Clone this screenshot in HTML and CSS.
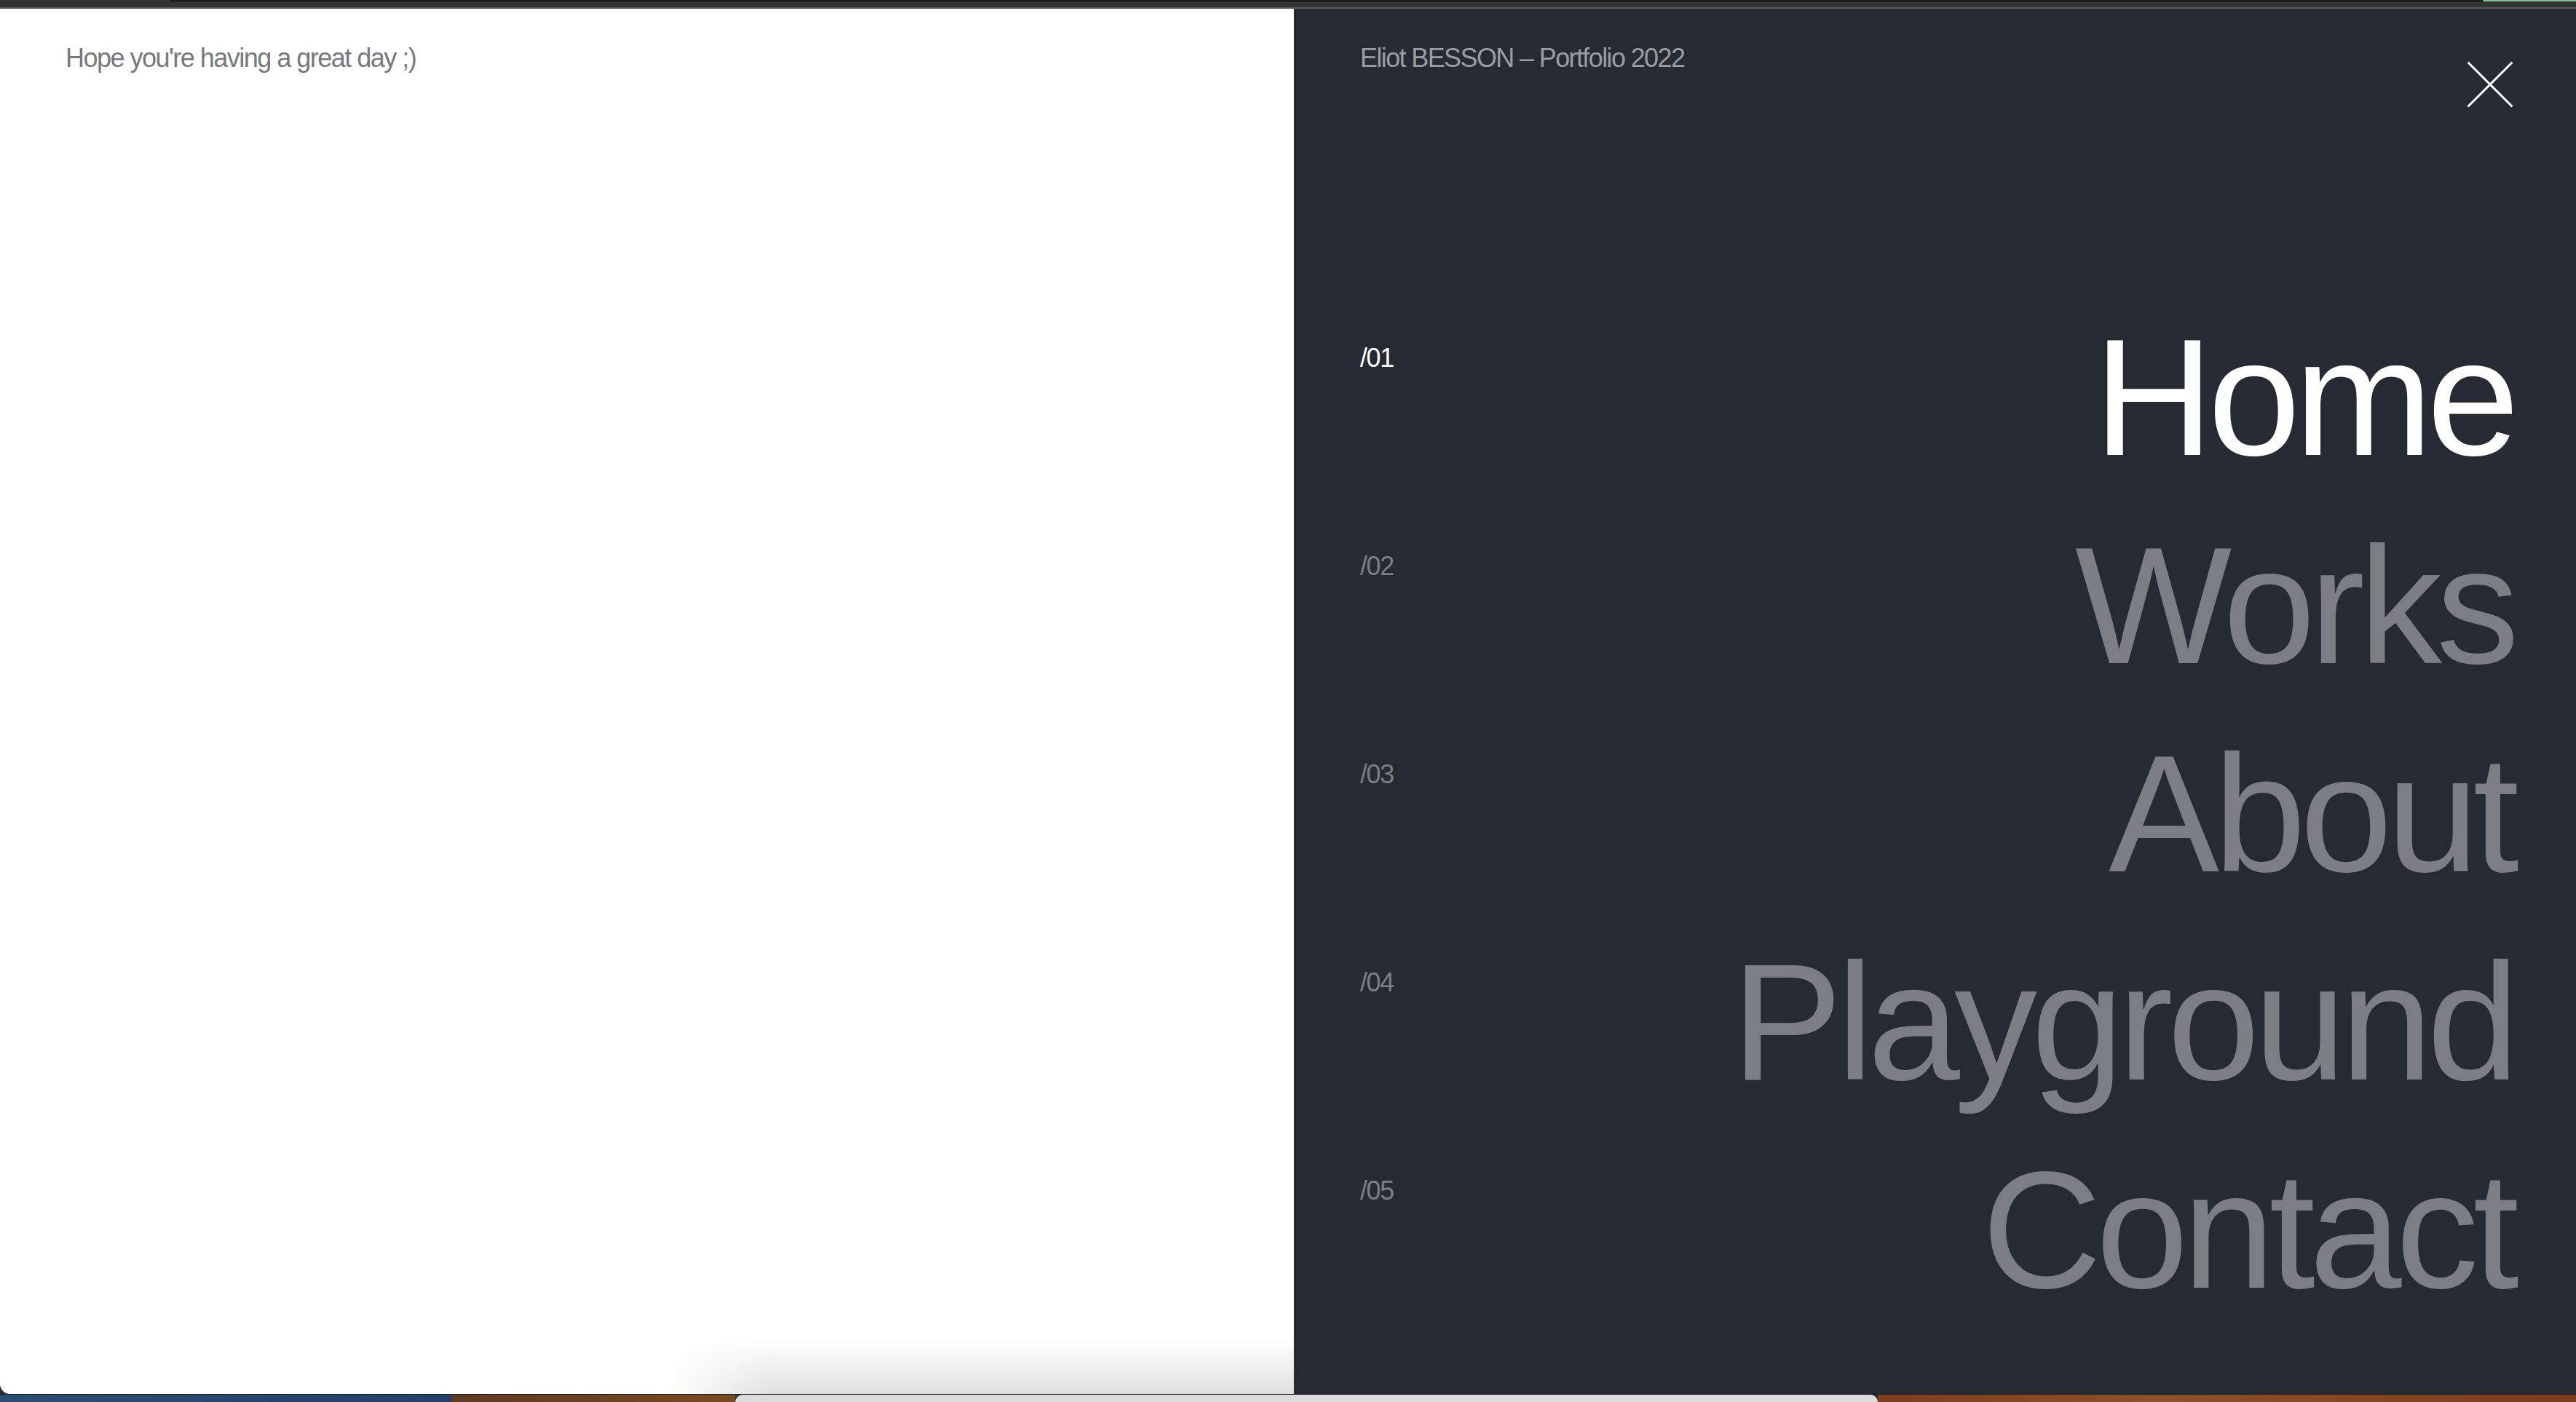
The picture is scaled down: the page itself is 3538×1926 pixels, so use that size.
FILE: index.html
```html
<!DOCTYPE html>
<html lang="en">
<head>
<meta charset="utf-8">
<title>Eliot BESSON – Portfolio 2022</title>
<link rel="stylesheet" href="styles.css">
</head>
<body>
  <div class="topbar">
    <div class="topbar-gap"></div>
    <div class="topbar-tab"></div>
    <div class="topbar-green"></div>
  </div>
  <div class="window">
    <section class="intro">
      <p class="greeting">Hope you're having a great day ;)</p>
    </section>
    <aside class="menu">
      <header class="menu-head">
        <p class="signature">Eliot BESSON – Portfolio 2022</p>
        <button class="close" aria-label="Close menu">
          <svg viewBox="0 0 64 64" width="64" height="64">
            <path d="M1.5 1.5 L62.5 62.5 M62.5 1.5 L1.5 62.5" stroke="#ffffff" stroke-width="3" fill="none"/>
          </svg>
        </button>
      </header>
      <nav class="menu-nav">
        <a class="menu-item is-active" href="#"><span class="num">/01</span><span class="label">Home</span></a>
        <a class="menu-item" href="#"><span class="num">/02</span><span class="label">Works</span></a>
        <a class="menu-item" href="#"><span class="num">/03</span><span class="label">About</span></a>
        <a class="menu-item" href="#"><span class="num">/04</span><span class="label">Playground</span></a>
        <a class="menu-item" href="#"><span class="num">/05</span><span class="label">Contact</span></a>
      </nav>
    </aside>
  </div>
  <div class="desk-line"></div>
  <div class="desktop">
    <div class="wall-blue"></div>
    <div class="wall-brown"></div>
    <div class="peek-window"></div>
    <div class="wall-orange"></div>
  </div>
</body>
</html>
```
FILE: styles.css
```css
* { box-sizing: border-box; }

html, body {
  margin: 0;
  padding: 0;
  width: 3538px;
  height: 1926px;
  overflow: hidden;
  background: #2a2f37;
  font-family: "Liberation Sans", Arial, Helvetica, sans-serif;
}

.topbar {
  height: 12px;
  background: #333333;
  border-bottom: 2px solid #5a5a5a;
  display: flex;
  align-items: flex-start;
}
.topbar-gap { width: 233px; }
.topbar-tab {
  flex: 1;
  height: 3px;
  background: #1e1e1e;
  border-bottom-left-radius: 6px;
}
.topbar-green {
  width: 128px;
  height: 2px;
  background: #86c08a;
  border-bottom-left-radius: 4px;
}

.window {
  display: flex;
  height: 1903px;
}

.intro {
  position: relative;
  width: 1777px;
  flex: none;
  background: #ffffff;
  border-bottom-left-radius: 14px;
  padding: 50px 90px;
  overflow: hidden;
}
.intro::after {
  content: "";
  position: absolute;
  right: 0;
  bottom: 0;
  width: 860px;
  height: 75px;
  background: linear-gradient(to bottom, rgba(0,0,0,0), rgba(0,0,0,0.12));
  -webkit-mask-image: linear-gradient(to right, transparent, #000 140px);
  mask-image: linear-gradient(to right, transparent, #000 140px);
}

.greeting {
  margin: 0;
  font-size: 36px;
  line-height: 36px;
  letter-spacing: -0.042em;
  color: #76797e;
}

.menu {
  flex: 1;
  background: #262b33;
  display: flex;
  flex-direction: column;
}

.menu-head {
  display: flex;
  justify-content: space-between;
  align-items: flex-start;
  padding: 50px 86px 0 91px;
}
.signature {
  margin: 0;
  font-size: 36px;
  line-height: 36px;
  letter-spacing: -0.045em;
  color: #9a9da1;
}
.close {
  margin: 22px 0 0 0;
  padding: 0;
  border: 0;
  background: none;
  width: 64px;
  height: 64px;
  display: block;
}
.close svg { display: block; }

.menu-nav {
  margin-top: auto;
  padding: 0 86px 82px 91px;
  display: flex;
  flex-direction: column;
}
.menu-item {
  height: 286px;
  display: flex;
  justify-content: space-between;
  align-items: flex-start;
  text-decoration: none;
  color: #7b7f85;
}
.menu-item .num {
  margin-top: 71px;
  font-size: 36px;
  line-height: 36px;
  letter-spacing: -0.04em;
}
.menu-item .label {
  font-size: 228px;
  line-height: 286px;
  letter-spacing: -0.035em;
  white-space: nowrap;
}
.menu-item.is-active { color: #ffffff; }

.desk-line {
  height: 1px;
  background: #1b1f27;
}
.desktop {
  height: 10px;
  display: flex;
}
.wall-blue {
  width: 620px;
  background: linear-gradient(to right, #2c4d74, #23406a);
}
.wall-brown {
  width: 390px;
  background: linear-gradient(to right, #5e3a22, #7a4a20);
}
.peek-window {
  width: 1569px;
  background: #dcdcdc;
  border-top-left-radius: 10px;
  border-top-right-radius: 10px;
}
.wall-orange {
  flex: 1;
  background: linear-gradient(to right, #7e3e1e, #8e5026 40%, #7c3c1c);
}
```
